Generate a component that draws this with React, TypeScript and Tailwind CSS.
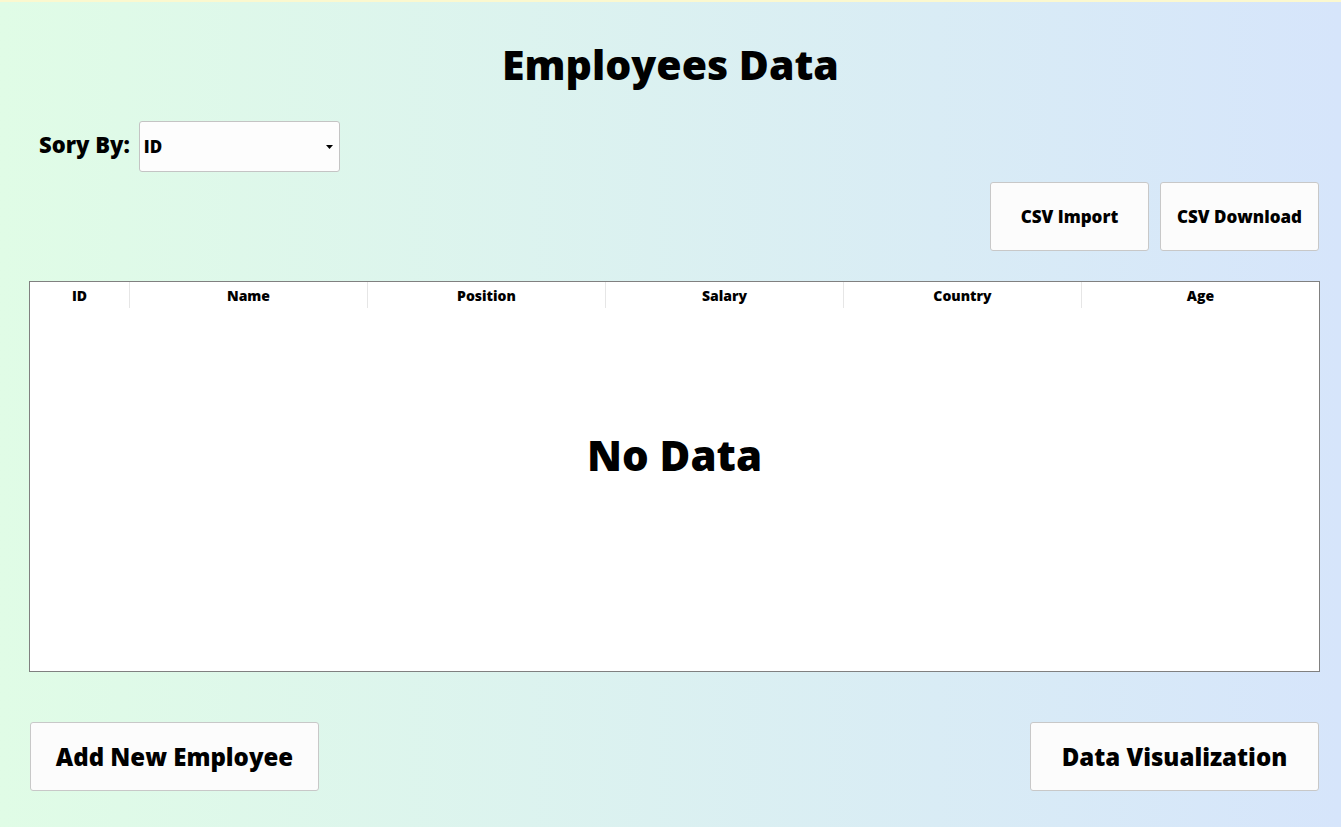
import React from "react";

const cols = [
  { label: "ID", w: "w-[100px]" },
  { label: "Name", w: "w-[238px]" },
  { label: "Position", w: "w-[238px]" },
  { label: "Salary", w: "w-[238px]" },
  { label: "Country", w: "w-[238px]" },
  { label: "Age", w: "flex-1" },
];

export default function App() {
  return (
    <div
      className="min-h-[827px] w-full border-t-2 border-[#fbf8cf] bg-gradient-to-r from-[#e0fce6] to-[#d6e5fb] text-black"
      style={{ fontFamily: '"Open Sans", "Noto Sans", sans-serif' }}
    >
      <h1 className="pt-[34px] text-center text-[41px] font-extrabold leading-[56px]">
        Employees Data
      </h1>
      <div className="flex flex-col pl-[29px] pr-[21px]">
        <div className="mt-[29px] flex items-center pl-[10px]">
          <span className="-mt-[4px] text-[22px] font-extrabold">Sory By:</span>
          <div className="relative ml-[9px] flex h-[51px] w-[201px] items-center rounded-[3px] border border-[#c4c4c4] bg-[#fdfdfd] pl-[4px]">
            <span className="text-[17px] font-extrabold">ID</span>
            <svg className="absolute right-[6px] top-[23px]" width="7" height="4" viewBox="0 0 7 4">
              <path d="M0 0 H7 L3.5 4 Z" fill="#000" />
            </svg>
          </div>
        </div>
        <div className="mt-[10px] flex justify-end gap-[11px] pr-[1px]">
          <button className="h-[69px] w-[159px] rounded-[3px] border border-[#c8c8c8] bg-[#fcfcfc] text-[17px] font-extrabold">
            CSV Import
          </button>
          <button className="h-[69px] w-[159px] rounded-[3px] border border-[#c8c8c8] bg-[#fcfcfc] text-[17px] font-extrabold">
            CSV Download
          </button>
        </div>
        <div className="mt-[30px] flex h-[391px] flex-col border border-[#808080] bg-white">
          <div className="flex h-[26px]">
            {cols.map((c, i) => (
              <div
                key={c.label}
                className={`${c.w} flex items-center justify-center text-[14px] font-extrabold ${
                  i < cols.length - 1 ? "border-r border-[#e6e6e6]" : ""
                }`}
              >
                {c.label}
              </div>
            ))}
          </div>
          <div className="flex flex-1 items-center justify-center pb-[70px]">
            <span className="text-[42px] font-extrabold">No Data</span>
          </div>
        </div>
        <div className="mt-[50px] flex justify-between pl-[1px] pr-[1px]">
          <button className="h-[69px] w-[289px] rounded-[3px] border border-[#c8c8c8] bg-[#fcfcfc] text-[24px] font-extrabold">
            Add New Employee
          </button>
          <button className="h-[69px] w-[289px] rounded-[3px] border border-[#c8c8c8] bg-[#fcfcfc] text-[24px] font-extrabold">
            Data Visualization
          </button>
        </div>
      </div>
    </div>
  );
}
